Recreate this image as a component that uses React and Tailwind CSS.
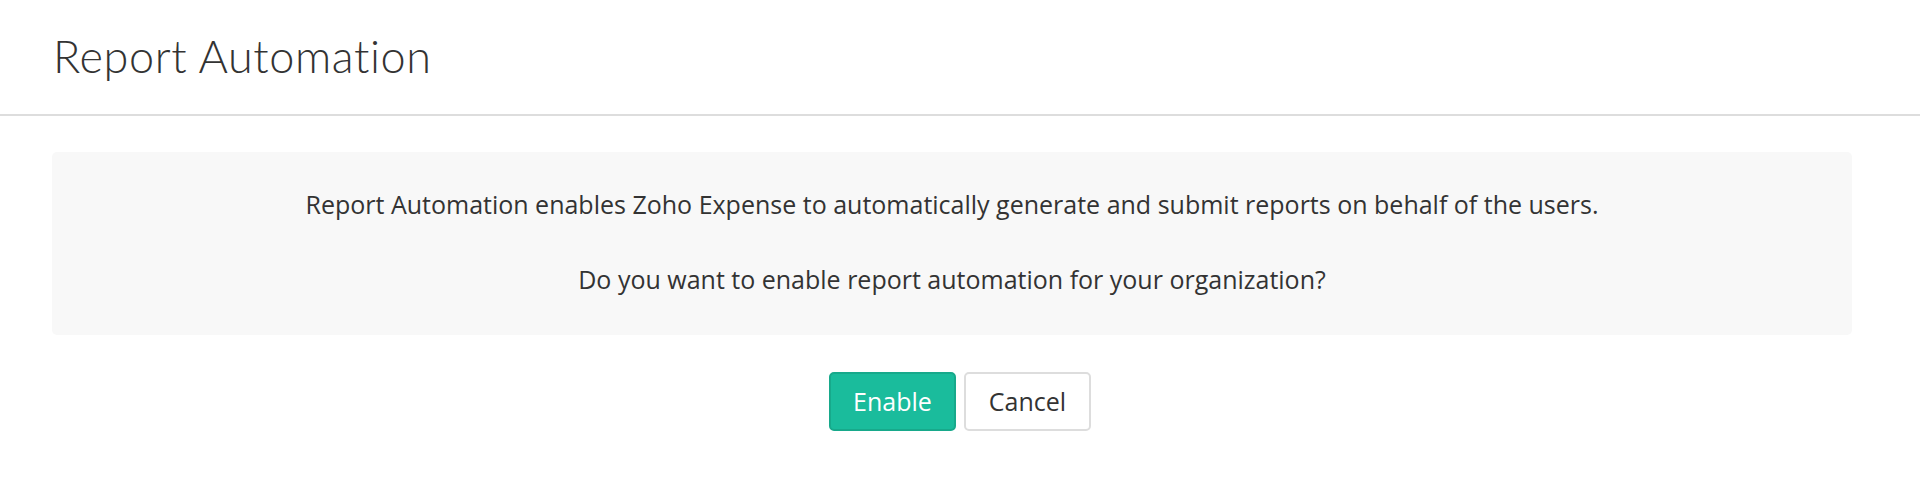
export default function App() {
  return (
    <div className="min-h-screen bg-white text-[#333]" style={{ fontFamily: '"Open Sans", Lato, sans-serif' }}>
      {/* Header */}
      <div className="h-[116px] border-b-2 border-[#dddddd] px-[53px] flex items-center">
        <h1 className="text-[45px] font-light text-[#333] tracking-[0.6px]" style={{ fontFamily: 'Lato, sans-serif' }}>Report Automation</h1>
      </div>

      <div className="pt-[36px]">
        <div className="ml-[52px] w-[1800px] bg-[#f8f8f8] rounded-[5px] h-[183px] pb-[3px] flex flex-col items-center justify-center gap-[38px] text-[25px]">
          <p>Report Automation enables Zoho Expense to automatically generate and submit reports on behalf of the users.</p>
          <p>Do you want to enable report automation for your organization?</p>
        </div>

        <div className="flex justify-center gap-[8px] mt-[37px]">
          <button className="w-[127px] h-[59px] rounded-[5px] bg-[#1abc9c] border-2 border-[#17a98b] text-white text-[25px]">
            Enable
          </button>
          <button className="w-[127px] h-[59px] rounded-[5px] bg-white border-2 border-[#dddddd] text-[#333] text-[25px]">
            Cancel
          </button>
        </div>
      </div>
    </div>
  );
}
